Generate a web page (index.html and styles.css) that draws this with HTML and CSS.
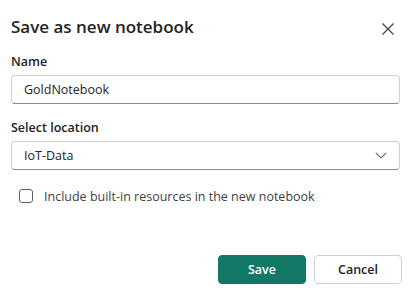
FILE: index.html
```html
<!DOCTYPE html>
<html lang="en">
<head>
    <meta charset="UTF-8">
    <meta name="viewport" content="width=device-width, initial-scale=1.0">
    <title>Save as new notebook</title>
    <link rel="stylesheet" href="styles.css">
</head>
<body>

<div class="dialog">
    <!-- dialog title -->
    <div class="dialog-header">
        <h2 class="dialog-title">Save as new notebook</h2>
        <button class="close-btn" aria-label="Close">
            <svg width="14" height="14" viewBox="0 0 14 14">
                <path d="M1.5 1.5 L12.5 12.5 M12.5 1.5 L1.5 12.5" stroke="#424242" stroke-width="1.2" fill="none"/>
            </svg>
        </button>
    </div>

    <div class="field name-field">
        <label for="name">Name</label>
        <div class="text-input">
            <input id="name" type="text" value="GoldNotebook">
        </div>
    </div>

    <div class="field location-field">
        <label>Select location</label>
        <div class="text-input dropdown">
            <span>IoT-Data</span>
            <svg width="12" height="7" viewBox="0 0 12 7">
                <path d="M0.8 0.8 L6 5.8 L11.2 0.8" stroke="#616161" stroke-width="1.1" fill="none"/>
            </svg>
        </div>
    </div>

    <label class="check-row">
        <span class="check-box"></span>
        <span>Include built-in resources in the new notebook</span>
    </label>

    <!-- actions -->
    <div class="dialog-footer">
        <button class="btn btn-primary">Save</button>
        <button class="btn">Cancel</button>
    </div>
</div>

</body>
</html>
```

FILE: styles.css
```css
body {
    margin: 0;
    background-color: #fff;
    font-family: "Open Sans", "Noto Sans", sans-serif;
    color: #242424;
}

.dialog {
    width: 418px;
    height: 300px;
    box-sizing: border-box;
    padding: 14px 16px 0 11px;
}

.dialog-header {
    display: flex;
    justify-content: space-between;
    align-items: center;
    height: 24px;
}
.dialog-title {
    margin: 0;
    margin-top: 1px;
    font-size: 17px;
    font-weight: 600;
    line-height: 24px;
}
.close-btn {
    border: none;
    background: none;
    padding: 0;
    margin-right: 7px;
    margin-top: 6px;
    width: 14px;
    height: 14px;
    display: flex;
}

.field label {
    display: block;
    font-size: 12.5px;
    font-weight: 600;
    line-height: 18px;
    margin-bottom: 4px;
}
.name-field {
    margin-top: 15px;
}
.location-field {
    margin-top: 15px;
}

.text-input {
    margin-right: 2px;
    height: 29px;
    box-sizing: border-box;
    border: 1px solid #d1d1d1;
    border-bottom-color: #8a8a8a;
    border-radius: 4px;
    display: flex;
    align-items: center;
    padding: 0 12px 0 12px;
}
.text-input input {
    border: none;
    outline: none;
    padding: 0;
    width: 100%;
    font-family: inherit;
    font-size: 12.5px;
    color: #242424;
    background: none;
}
.dropdown {
    justify-content: space-between;
    font-size: 12.5px;
}

.check-row {
    display: flex;
    align-items: center;
    gap: 11px;
    margin-top: 19px;
    padding-left: 8px;
    height: 14px;
    font-size: 12.5px;
    color: #424242;
}
.check-box {
    width: 14px;
    height: 14px;
    box-sizing: border-box;
    border: 1px solid #616161;
    border-radius: 3px;
}

.dialog-footer {
    display: flex;
    justify-content: flex-end;
    gap: 8px;
    margin-top: 52px;
}
.btn {
    width: 88px;
    height: 29px;
    box-sizing: border-box;
    border: 1px solid #d1d1d1;
    border-radius: 4px;
    background-color: #fff;
    font-family: inherit;
    font-size: 12.5px;
    font-weight: 600;
    color: #242424;
    cursor: pointer;
}
.btn-primary {
    background-color: #117865;
    border-color: #117865;
    color: #fff;
}
```
